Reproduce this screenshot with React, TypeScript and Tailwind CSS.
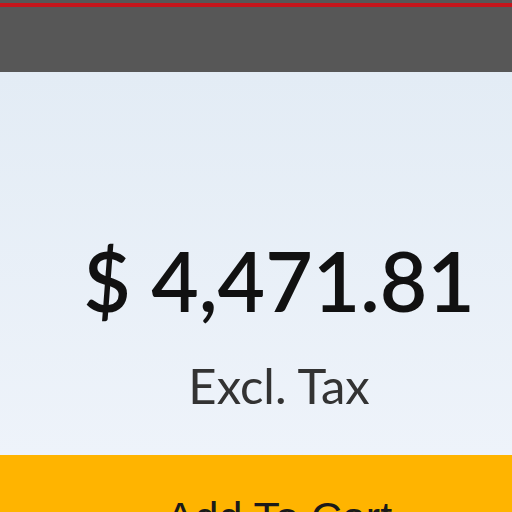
export default function App() {
  return (
    <div className="h-[512px] w-[512px] overflow-hidden flex flex-col" style={{ fontFamily: 'Lato, "Liberation Sans", sans-serif' }}>
      <header className="h-[72px] shrink-0 bg-[#575757] pt-[3px]">
        <div className="h-[4px] bg-[#c4161c]" />
      </header>
      <main className="h-[383px] shrink-0 bg-gradient-to-b from-[#e3ecf5] to-[#eef3fa] flex flex-col items-center pl-[46px] pt-[167px]">
        <div className="text-[82px] leading-none font-semibold text-[#111] whitespace-nowrap">$ 4,471.81</div>
        <div className="mt-[40px] text-[49px] leading-none text-[#333] whitespace-nowrap">Excl. Tax</div>
      </main>
      <button className="h-[80px] shrink-0 bg-[#ffb400] flex justify-center pl-[46px] pt-[41px]">
        <span className="text-[43px] leading-none text-[#1a1a1a] whitespace-nowrap" style={{ fontFamily: '"Liberation Sans", Arial, sans-serif' }}>Add To Cart</span>
      </button>
    </div>
  );
}
